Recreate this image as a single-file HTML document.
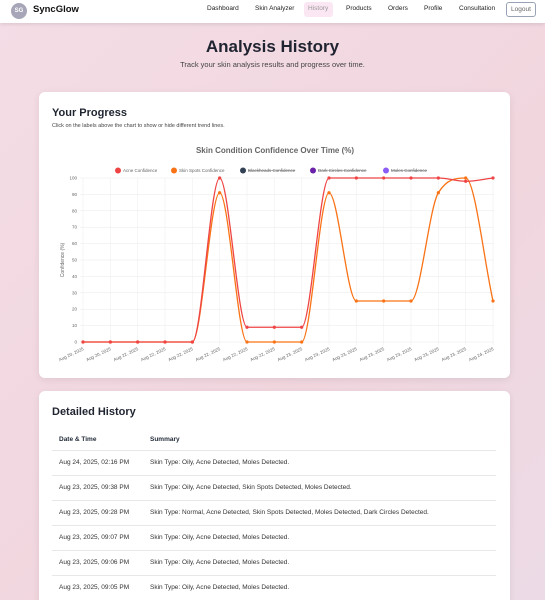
<!DOCTYPE html>
<html><head><meta charset="utf-8"><style>
*{margin:0;padding:0;box-sizing:border-box}
html{width:545px;height:600px;overflow:hidden}
body{width:545px;height:600px;overflow:hidden;font-family:"Liberation Sans",sans-serif;background:linear-gradient(135deg,#f4dde6,#f1d6de 60%,#ecdbe6);position:relative;color:#1f2937}
.nav{position:absolute;left:0;top:0;width:545px;height:23px;background:#fff;box-shadow:0 1px 4px rgba(0,0,0,.12)}
.logo{position:absolute;left:11px;top:3px;width:16px;height:16px;border-radius:50%;background:#a6a6b8;color:#fff;font-size:6px;font-weight:bold;text-align:center;line-height:16px}
.brand{position:absolute;left:33px;top:4px;font-size:9.5px;font-weight:bold;color:#111}
.nav a{position:absolute;top:5px;font-size:6.5px;color:#222}
.hist{position:absolute;left:304px;top:2px;width:29px;height:15px;background:#fbe7f3;border-radius:3px}
.logout{position:absolute;left:506px;top:2px;width:30px;height:15px;border:1px solid #9aa3b5;border-radius:3px;font-size:6.5px;color:#666;text-align:center;line-height:13px}
h1{position:absolute;left:0;width:545px;top:37px;text-align:center;font-size:17px;font-weight:bold;color:#1f2430}
.sub{position:absolute;left:0;width:545px;top:60px;text-align:center;font-size:7.5px;color:#444}
.card{position:absolute;left:39px;width:471px;background:#fff;border-radius:6px;box-shadow:0 2px 8px rgba(0,0,0,.08)}
.card h2{position:absolute;left:13px;font-size:11px;font-weight:bold;color:#1f2430}
.row{position:absolute;left:52px;width:444px;height:25px;border-top:1px solid #e7e7e7}
.row span{position:absolute;top:8px;font-size:6.5px;color:#333}
</style></head><body>
<div class="nav">
<div class="logo">SG</div><div class="brand">SyncGlow</div>
<div class="hist"></div>
<a style="left:207px">Dashboard</a><a style="left:255px">Skin Analyzer</a><a style="left:308px;color:#999">History</a><a style="left:346px">Products</a><a style="left:388px">Orders</a><a style="left:424px">Profile</a><a style="left:459px">Consultation</a>
<div class="logout">Logout</div>
</div>
<h1>Analysis History</h1>
<div class="sub">Track your skin analysis results and progress over time.</div>
<div class="card" style="top:92px;height:286px">
<h2 style="top:15px">Your Progress</h2>
<div style="position:absolute;left:13px;top:31px;font-size:5.5px;color:#444">Click on the labels above the chart to show or hide different trend lines.</div>
</div>
<svg style="position:absolute;left:0;top:0" width="545" height="380" id="ch" font-family="Liberation Sans,sans-serif">
<text x="275" y="153" text-anchor="middle" font-size="8" font-weight="bold" fill="#666">Skin Condition Confidence Over Time (%)</text>
<g font-size="4.5" fill="#666">
<circle cx="118" cy="170.5" r="3" fill="#ef4444"/><text x="123" y="172">Acne Confidence</text>
<circle cx="174" cy="170.5" r="3" fill="#f97316"/><text x="179" y="172">Skin Spots Confidence</text>
<circle cx="243" cy="170.5" r="3" fill="#334155"/><text x="248" y="172" text-decoration="line-through">Blackheads Confidence</text>
<circle cx="313" cy="170.5" r="3" fill="#6b21a8"/><text x="318" y="172" text-decoration="line-through">Dark Circles Confidence</text>
<circle cx="386" cy="170.5" r="3" fill="#8b5cf6"/><text x="391" y="172" text-decoration="line-through">Moles Confidence</text>
</g>
<g id="grid"></g>
<text transform="translate(64,260) rotate(-90)" text-anchor="middle" font-size="5" fill="#666">Confidence (%)</text>
</svg>
<div class="card" style="top:391px;height:230px">
<h2 style="top:15px">Detailed History</h2>
</div>
<div style="position:absolute;left:59px;top:436px;font-size:6.5px;font-weight:bold">Date &amp; Time</div>
<div style="position:absolute;left:150px;top:436px;font-size:6.5px;font-weight:bold">Summary</div>
<div class="row" style="top:450px"><span style="left:7px">Aug 24, 2025, 02:16 PM</span><span style="left:98px">Skin Type: Oily, Acne Detected, Moles Detected.</span></div>
<div class="row" style="top:475px"><span style="left:7px">Aug 23, 2025, 09:38 PM</span><span style="left:98px">Skin Type: Oily, Acne Detected, Skin Spots Detected, Moles Detected.</span></div>
<div class="row" style="top:500px"><span style="left:7px">Aug 23, 2025, 09:28 PM</span><span style="left:98px">Skin Type: Normal, Acne Detected, Skin Spots Detected, Moles Detected, Dark Circles Detected.</span></div>
<div class="row" style="top:525px"><span style="left:7px">Aug 23, 2025, 09:07 PM</span><span style="left:98px">Skin Type: Oily, Acne Detected, Moles Detected.</span></div>
<div class="row" style="top:550px"><span style="left:7px">Aug 23, 2025, 09:06 PM</span><span style="left:98px">Skin Type: Oily, Acne Detected, Moles Detected.</span></div>
<div class="row" style="top:575px"><span style="left:7px">Aug 23, 2025, 09:05 PM</span><span style="left:98px">Skin Type: Oily, Acne Detected, Moles Detected.</span></div>
<script>
var g=document.getElementById('grid'),s='';
var x0=83,dx=(493-83)/15,y0=342,k=1.64;
var X=i=>x0+i*dx,Y=v=>y0-v*k;
for(var v=0;v<=100;v+=10){s+='<line x1="80" x2="494" y1="'+Y(v)+'" y2="'+Y(v)+'" stroke="#e8e8e8" stroke-width="0.5"/><text x="77" y="'+(Y(v)+1.5)+'" text-anchor="end" font-size="4.5" fill="#666">'+v+'</text>';}
var labs=['Aug 20, 2025','Aug 20, 2025','Aug 22, 2025','Aug 22, 2025','Aug 22, 2025','Aug 22, 2025','Aug 22, 2025','Aug 22, 2025','Aug 23, 2025','Aug 23, 2025','Aug 23, 2025','Aug 23, 2025','Aug 23, 2025','Aug 23, 2025','Aug 23, 2025','Aug 24, 2025'];
for(var i=0;i<16;i++){s+='<line x1="'+X(i)+'" x2="'+X(i)+'" y1="178" y2="345" stroke="#ececec" stroke-width="0.5"/><text transform="translate('+(X(i)+1)+',350) rotate(-25)" text-anchor="end" font-size="4.5" fill="#666">'+labs[i]+'</text>';}
function path(d){var n=d.length,del=[],m=[];for(var i=0;i<n-1;i++)del.push(d[i+1]-d[i]);
m[0]=del[0];m[n-1]=del[n-2];for(var i=1;i<n-1;i++){m[i]=(del[i-1]*del[i]<=0)?0:(del[i-1]+del[i])/2;}
for(var i=0;i<n-1;i++){if(del[i]==0){m[i]=0;m[i+1]=0;continue;}var a=m[i]/del[i],b=m[i+1]/del[i],h=a*a+b*b;if(h>9){var t=3/Math.sqrt(h);m[i]=t*a*del[i];m[i+1]=t*b*del[i];}}
var p='M'+X(0)+','+Y(d[0]);for(var i=0;i<n-1;i++){p+=' C'+(X(i)+dx/3)+','+Y(d[i]+m[i]/3)+' '+(X(i+1)-dx/3)+','+Y(d[i+1]-m[i+1]/3)+' '+X(i+1)+','+Y(d[i+1]);}return p;}
var ac=[0,0,0,0,0,100,9,9,9,100,100,100,100,100,98,100],sp=[0,0,0,0,0,91,0,0,0,91,25,25,25,91,100,25];
[[sp,'#f97316'],[ac,'#ef4444']].forEach(function(q){s+='<path d="'+path(q[0])+'" fill="none" stroke="'+q[1]+'" stroke-width="1.3"/>';q[0].forEach(function(v,i){s+='<circle cx="'+X(i)+'" cy="'+Y(v)+'" r="1.6" fill="'+q[1]+'"/>';});});
g.innerHTML=s;
</script>
</body></html>
